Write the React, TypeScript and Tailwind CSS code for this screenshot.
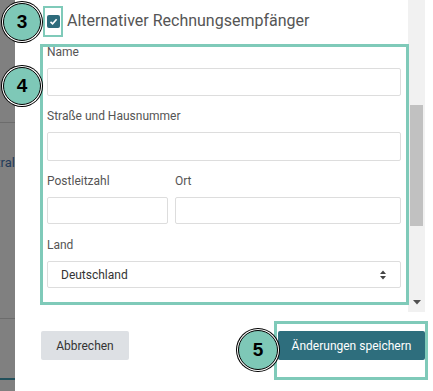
import React from "react";

function Badge({ n, className }: { n: string; className: string }) {
  return (
    <div
      className={
        "absolute rounded-full bg-[#7ec8b7] border border-black shadow-[0_0_0_1px_#ffffff,0_0_0_2px_#000000] flex items-center justify-center text-[19px] font-bold text-black font-['Liberation_Sans',sans-serif] " +
        className
      }
    >
      {n}
    </div>
  );
}

function Label({ children }: { children: React.ReactNode }) {
  return <div className="text-[12px] leading-[16px] text-[#555] mb-[8px]">{children}</div>;
}

export default function App() {
  return (
    <div className="relative w-[433px] h-[391px] overflow-hidden bg-white flex font-[Roboto,'Liberation_Sans',sans-serif]">
      {/* backdrop strip */}
      <div className="w-[15px] shrink-0 bg-[#808080] flex flex-col">
        <div className="h-[122px] shrink-0" />
        <div className="h-px shrink-0 bg-[#6c6c6c]" />
        <div className="mt-[32px] h-[16px] shrink-0 flex justify-end overflow-hidden whitespace-nowrap text-[13px] leading-[16px] text-[#233b5a]">
          Zentral
        </div>
        <div className="h-[147px] shrink-0" />
        <div className="h-px shrink-0 bg-[#6c6c6c]" />
        <div className="h-[59px] shrink-0" />
        <div className="h-[2px] shrink-0 bg-[#22505b]" />
      </div>

      {/* modal */}
      <div className="flex-1 flex flex-col min-w-0">
        <div className="h-[312px] shrink-0 flex">
          <div className="flex-1 min-w-0 pl-[32px] pr-[7px] overflow-hidden">
            <div className="h-[44px] flex items-center gap-[7px] pb-[2px]">
              <div className="w-[13px] h-[13px] rounded-[2px] bg-[#2e6c7c] flex items-center justify-center">
                <svg width="9" height="9" viewBox="0 0 9 9">
                  <path d="M1.5 4.8 L3.6 6.8 L7.6 2.2" stroke="white" strokeWidth="1.6" fill="none" />
                </svg>
              </div>
              <span className="text-[16px] leading-[20px] text-[#555]">Alternativer Rechnungsempfänger</span>
            </div>

            <Label>Name</Label>
            <div className="h-[28px] border border-[#dddddd] rounded-[2px] bg-white" />

            <div className="mt-[12px]">
              <Label>Straße und Hausnummer</Label>
              <div className="h-[29px] border border-[#dddddd] rounded-[2px] bg-white" />
            </div>

            <div className="mt-[12px] grid grid-cols-[121px_1fr] gap-x-[7px]">
              <div>
                <Label>Postleitzahl</Label>
                <div className="h-[27px] border border-[#dddddd] rounded-[2px] bg-white" />
              </div>
              <div>
                <Label>Ort</Label>
                <div className="h-[27px] border border-[#dddddd] rounded-[2px] bg-white" />
              </div>
            </div>

            <div className="mt-[13px]">
              <Label>Land</Label>
              <div className="h-[27px] border border-[#dddddd] rounded-[2px] bg-white flex items-center justify-between pl-[13px] pr-[14px]">
                <span className="text-[12px] text-[#333]">Deutschland</span>
                <svg width="6" height="10" viewBox="0 0 6 10">
                  <path d="M0 4 L3 0.5 L6 4 Z" fill="#444" />
                  <path d="M0 6 L3 9.5 L6 6 Z" fill="#444" />
                </svg>
              </div>
            </div>
          </div>

          {/* scrollbar */}
          <div className="w-[17px] shrink-0 bg-[#f1f1f1] flex flex-col items-center">
            <div className="h-[105px] shrink-0" />
            <div className="w-[13px] h-[121px] shrink-0 bg-[#c1c1c1]" />
            <div className="flex-1" />
            <div className="h-[17px] shrink-0 flex items-center justify-center pb-[3px]">
              <svg width="8" height="5" viewBox="0 0 8 5">
                <path d="M0 0 L8 0 L4 4.5 Z" fill="#505050" />
              </svg>
            </div>
          </div>
          <div className="w-[8px] shrink-0" />
        </div>

        {/* footer */}
        <div className="flex-1 flex justify-between items-start pt-[19px] pl-[26px] pr-[8px]">
          <button className="w-[88px] h-[29px] bg-[#dde0e4] rounded-[2px] text-[12px] text-[#333]">Abbrechen</button>
          <button className="w-[147px] h-[29px] bg-[#2e6e7d] rounded-[2px] text-[12px] text-white">Änderungen speichern</button>
        </div>
      </div>

      {/* annotation overlays */}
      <div className="absolute left-[43px] top-[6px] w-[20px] h-[31px] border-2 border-[#7fcab9]" />
      <div className="absolute left-[40px] top-[44px] w-[369px] h-[261px] border-[3px] border-[#7fcab9]" />
      <div className="absolute left-[274px] top-[321px] w-[154px] h-[59px] border-[3px] border-[#7fcab9]" />

      <Badge n="3" className="left-[3px] top-[3px] w-[38px] h-[38px]" />
      <Badge n="4" className="left-[3px] top-[67px] w-[38px] h-[38px]" />
      <Badge n="5" className="left-[238px] top-[330px] w-[40px] h-[40px]" />
    </div>
  );
}
